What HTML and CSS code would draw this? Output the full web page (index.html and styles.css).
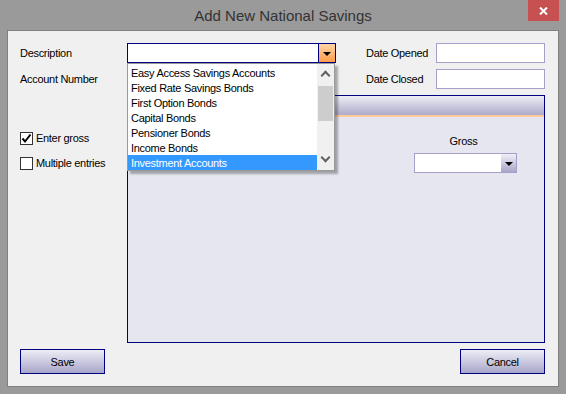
FILE: index.html
```html
<!DOCTYPE html>
<html lang="en">

<head>
    <meta charset="UTF-8" />
    <title>Add New National Savings</title>
    <link rel="stylesheet" href="styles.css">
</head>

<body>
    <div class="window">
        <div class="titlebar">
            <span class="title">Add New National Savings</span>
            <button class="close" type="button">
                <svg width="9" height="8" viewBox="0 0 9 8">
                    <path d="M1 0.5 L8 7.5 M8 0.5 L1 7.5" stroke="#fff" stroke-width="2" fill="none" />
                </svg>
            </button>
        </div>

        <div class="client">
            <div class="fields">
                <label class="lbl">Description</label>
                <div class="combo desc">
                    <span class="combo-text"></span>
                    <span class="combo-btn orange"><i class="tri"></i></span>

                    <div class="droplist">
                        <ul>
                            <li>Easy Access Savings Accounts</li>
                            <li>Fixed Rate Savings Bonds</li>
                            <li>First Option Bonds</li>
                            <li>Capital Bonds</li>
                            <li>Pensioner Bonds</li>
                            <li>Income Bonds</li>
                            <li class="selected">Investment Accounts</li>
                        </ul>
                        <div class="scrollbar">
                            <span class="chev up"></span>
                            <span class="thumb"></span>
                            <span class="chev down"></span>
                        </div>
                    </div>
                </div>
                <label class="lbl date-lbl">Date Opened</label>
                <input class="date" type="text">

                <label class="lbl">Account Number</label>
                <span></span>
                <label class="lbl date-lbl">Date Closed</label>
                <input class="date" type="text">
            </div>

            <div class="main">
                <div class="options">
                    <label class="check">
                        <span class="box">
                            <svg width="11" height="11" viewBox="0 0 11 11">
                                <path d="M1.5 5.5 L4 8.5 L9.5 1.5" stroke="#000" stroke-width="2" fill="none" />
                            </svg>
                        </span>
                        Enter gross
                    </label>
                    <label class="check">
                        <span class="box"></span>
                        Multiple entries
                    </label>
                </div>

                <div class="panel">
                    <div class="panel-head"></div>
                    <div class="panel-body">
                        <div class="gross">
                            <div class="gross-lbl">Gross</div>
                            <div class="combo gross-combo">
                                <span class="combo-text"></span>
                                <span class="combo-btn lilac"><i class="tri"></i></span>
                            </div>
                        </div>
                    </div>
                </div>
            </div>

            <div class="buttons">
                <button class="btn" type="button">Save</button>
                <button class="btn" type="button">Cancel</button>
            </div>
        </div>
    </div>
</body>

</html>
```

FILE: styles.css
```css
body {
    margin: 0;
    font-family: 'Liberation Sans', Arial, sans-serif;
    font-size: 11px;
    letter-spacing: -0.3px;
    color: #000;
}

.window {
    width: 566px;
    height: 394px;
    background-color: #9a9a9a;
    box-sizing: border-box;
}

.titlebar {
    position: relative;
    height: 30px;
    text-align: center;
}

.title {
    display: inline-block;
    font-size: 15px;
    letter-spacing: 0;
    line-height: 31px;
    color: #333;
}

.close {
    position: absolute;
    top: 0;
    right: 7px;
    width: 31px;
    height: 21px;
    padding: 0;
    border: none;
    background-color: #c75050;
    display: flex;
    align-items: center;
    justify-content: center;
}

.client {
    margin: 0 7px;
    height: 357px;
    box-sizing: border-box;
    border: 1px solid #808080;
    background-color: #f0f0f0;
    padding: 12px 13px 0 12px;
}

/* top fields */

.fields {
    display: grid;
    grid-template-columns: 107px 209px 100px 109px;
    grid-template-rows: 20px 20px;
    row-gap: 6px;
    align-items: center;
}

.lbl {
    line-height: 14px;
}

.date-lbl {
    padding-left: 30px;
}

.date {
    height: 20px;
    width: 109px;
    box-sizing: border-box;
    margin: 0;
    border: 1px solid #a6a0c8;
    background-color: #fff;
}

.combo {
    position: relative;
    display: flex;
    height: 20px;
    box-sizing: border-box;
    background-color: #fff;
}

.combo-text {
    flex: 1;
}

.combo-btn {
    width: 16px;
    display: flex;
    align-items: center;
    justify-content: center;
}

.tri {
    width: 0;
    height: 0;
    border-left: 4px solid transparent;
    border-right: 4px solid transparent;
    border-top: 4px solid #000;
    margin-top: 1px;
}

.desc {
    border: 1px solid #000080;
}

.orange {
    border-left: 1px solid #000080;
    background: linear-gradient(#ffd6a8, #ff9c48);
}

/* drop down list */

.droplist {
    position: absolute;
    top: 19px;
    left: -1px;
    width: 208px;
    height: 108px;
    box-sizing: border-box;
    border: 1px solid #9a9a9a;
    background-color: #fff;
    box-shadow: 3px 3px 2px rgba(0, 0, 0, 0.3);
    z-index: 5;
    overflow: hidden;
}

.droplist ul {
    list-style: none;
    margin: 0;
    padding: 1px 0 0 0;
    width: 189px;
}

.droplist li {
    height: 15px;
    line-height: 17px;
    padding-left: 3px;
    white-space: nowrap;
}

.droplist li.selected {
    background-color: #3399ff;
    color: #fff;
}

.scrollbar {
    position: absolute;
    top: 0;
    right: 0;
    bottom: 0;
    width: 17px;
    background-color: #f0f0f0;
    display: flex;
    flex-direction: column;
    align-items: center;
}

.chev {
    width: 5px;
    height: 5px;
    border-left: 2px solid #606060;
    border-top: 2px solid #606060;
}

.chev.up {
    transform: rotate(45deg);
    margin-top: 8px;
}

.chev.down {
    transform: rotate(225deg);
    margin-top: auto;
    margin-bottom: 9px;
}

.thumb {
    width: 15px;
    height: 35px;
    margin-top: 7px;
    background-color: #cdcdcd;
}

/* main area */

.main {
    display: grid;
    grid-template-columns: 107px 418px;
    margin-top: 6px;
}

.options {
    display: flex;
    flex-direction: column;
    gap: 12px;
    padding-top: 37px;
}

.check {
    display: flex;
    align-items: center;
    gap: 3px;
    height: 13px;
    line-height: 13px;
}

.box {
    width: 13px;
    height: 13px;
    box-sizing: border-box;
    border: 1px solid #333;
    background-color: #fff;
    display: flex;
    align-items: center;
    justify-content: center;
}

.panel {
    height: 248px;
    box-sizing: border-box;
    border: 1px solid #000080;
    background-color: #e6e6f0;
}

.panel-head {
    height: 19px;
    background: linear-gradient(#ededf5, #aeaac9);
    border-bottom: 2px solid #ffcc99;
}

.panel-body {
    padding: 17px 0 0 286px;
}

.gross {
    width: 103px;
}

.gross-lbl {
    text-align: center;
    line-height: 14px;
    padding-right: 4px;
}

.gross-combo {
    margin-top: 5px;
    border: 1px solid #a6a0c8;
}

.lilac {
    width: 15px;
    background: linear-gradient(#f0f0f8, #a9a5c6);
}

/* buttons */

.buttons {
    display: flex;
    justify-content: space-between;
    margin-top: 6px;
}

.btn {
    width: 85px;
    height: 25px;
    padding: 0;
    border: 1px solid #000080;
    background: linear-gradient(#ededf6, #a9a6c9);
    font-family: 'Liberation Sans', Arial, sans-serif;
    font-size: 11px;
    letter-spacing: -0.3px;
    color: #000;
}
```
